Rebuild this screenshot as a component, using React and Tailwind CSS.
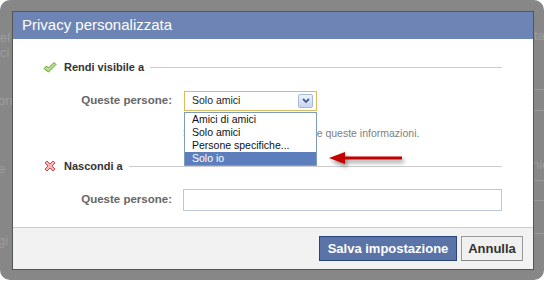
import React from 'react';

const font = { fontFamily: '"Liberation Sans", Arial, sans-serif' };

const CheckIcon = () => (
  <svg width="14" height="13" viewBox="0 0 14 13">
    <path d="M1 7.5 L3.5 5 L5.5 7 L11 1.5 L13 3.5 L5.5 11 Z" fill="#b9e08e" stroke="#5f9e2f" strokeWidth="1" strokeLinejoin="round" />
  </svg>
);

const CrossIcon = () => (
  <svg width="12" height="12" viewBox="0 0 12 12">
    <path d="M1 3 L3 1 L6 4 L9 1 L11 3 L8 6 L11 9 L9 11 L6 8 L3 11 L1 9 L4 6 Z" fill="#f4b9b9" stroke="#d24a4a" strokeWidth="1" strokeLinejoin="round" />
  </svg>
);

const RedArrow = () => (
  <svg width="76" height="18" viewBox="0 0 76 18" className="drop-shadow-[2px_3px_2px_rgba(0,0,0,0.45)]">
    <path d="M0 7 L16 1 L16 5.5 L73 5.5 L73 8.5 L16 8.5 L16 13 Z" fill="#c40000" />
  </svg>
);

const Heading = ({ icon, children }) => (
  <div className="flex items-center h-[14px]">
    <div className="w-[14px] flex justify-center">{icon}</div>
    <span className="ml-[7px] text-[11px] font-bold text-[#333]">{children}</span>
    <div className="flex-1 h-px bg-[#ccc] ml-[6px]" />
  </div>
);

const options = ['Amici di amici', 'Solo amici', 'Persone specifiche...', 'Solo io'];

export default function App() {
  return (
    <div className="w-[545px] h-[281px] bg-white" style={font}>
      <div className="relative w-[544px] h-[280px] rounded-[10px] bg-[#878787] overflow-hidden pt-[11px] pl-[12px]">
        {/* page behind the overlay */}
        <span className="absolute left-0 top-[28px] text-[13px] text-[#9d9d9d]">el</span>
        <span className="absolute left-0 top-[43px] text-[13px] text-[#9d9d9d]">ci</span>
        <span className="absolute left-[-2px] top-[91px] text-[13px] text-[#9d9d9d]">on</span>
        <span className="absolute left-[-2px] top-[159px] text-[13px] text-[#9d9d9d]">e</span>
        <span className="absolute left-[-2px] top-[231px] text-[13px] text-[#9d9d9d]">gi</span>
        <span className="absolute left-[534px] top-[26px] text-[13px] text-[#9d9d9d]">ta</span>
        <span className="absolute left-[532px] top-[155px] text-[13px] text-[#9d9d9d]">nic</span>
        <div className="absolute left-[534px] top-[89px] w-[12px] h-px bg-[#999]" />
        <div className="absolute left-[534px] top-[110px] w-[12px] h-px bg-[#999]" />
        <div className="absolute left-[534px] top-[180px] w-[12px] h-px bg-[#999]" />
        <div className="absolute left-[534px] top-[200px] w-[12px] h-px bg-[#999]" />
        <div className="absolute left-[534px] top-[233px] w-[12px] h-px bg-[#999]" />

        {/* Dialog */}
        <div className="relative w-[522px] h-[259px] border border-[#555] border-t-[#3b5998] bg-white flex flex-col">
          <div className="h-[27px] bg-[#6d84b4] flex items-center pl-[9px]">
            <span className="text-[15px] text-white">Privacy personalizzata</span>
          </div>

          <div className="pl-[30px] pr-[31px] pt-[21px] pb-[16px]">
            <Heading icon={<CheckIcon />}>Rendi visibile a</Heading>

            <div className="mt-[17px] flex items-center h-[20px]">
              <span className="ml-[21px] w-[108px] text-right text-[11.5px] font-bold text-[#666]">Queste persone:</span>
              <div className="relative ml-[12px] w-[133px] h-[20px]">
                <div className="w-full h-full border border-[#e2b85c] bg-white flex items-center justify-between pl-[7px] pr-[3px]">
                  <span className="text-[10.5px] text-[#222]">Solo amici</span>
                  <div className="w-[15px] h-[14px] rounded-[2px] border border-[#a7b9d9] bg-gradient-to-b from-[#eef3fb] to-[#c7d6ef] flex items-center justify-center">
                    <svg width="8" height="6" viewBox="0 0 8 6">
                      <path d="M1 1 L4 4 L7 1" fill="none" stroke="#4a5f86" strokeWidth="1.8" />
                    </svg>
                  </div>
                </div>
                <div className="absolute left-0 top-[21px] w-[133px] border border-[#7f9db9] bg-white z-10">
                  {options.map((opt, i) => (
                    <div
                      key={i}
                      className={`h-[13px] leading-[13px] pl-[7px] text-[10.5px] ${
                        opt === 'Solo io' ? 'bg-[#5d7ebd] text-white' : 'text-[#111]'
                      }`}
                    >
                      {opt}
                    </div>
                  ))}
                </div>
                <div className="absolute left-[145px] top-[60px] z-10">
                  <RedArrow />
                </div>
              </div>
            </div>

            <div className="mt-[16px] ml-[140px] h-[13px] leading-[13px] text-[10.5px] text-[#808080] whitespace-nowrap">
              Solo gli amici possono vedere queste informazioni.
            </div>

            <div className="mt-[19px]">
              <Heading icon={<CrossIcon />}>Nascondi a</Heading>
            </div>

            <div className="mt-[16px] flex items-center h-[22px]">
              <span className="ml-[21px] w-[108px] text-right text-[11.5px] font-bold text-[#666]">Queste persone:</span>
              <div className="ml-[11px] flex-1 h-[22px] border border-[#bdc7d8] bg-white" />
            </div>
          </div>

          <div className="flex-1 border-t border-[#ccc] bg-[#f2f2f2] flex justify-end items-start pt-[8px] pr-[10px] gap-[4px]">
            <button className="w-[138px] h-[25px] bg-[#5b74a8] border border-[#29447e] text-white text-[13px] font-bold">
              Salva impostazione
            </button>
            <button className="w-[62px] h-[25px] bg-[#f0f0f0] border border-[#999] border-b-[#888] text-[#333] text-[13px] font-bold">
              Annulla
            </button>
          </div>
        </div>
      </div>
    </div>
  );
}
